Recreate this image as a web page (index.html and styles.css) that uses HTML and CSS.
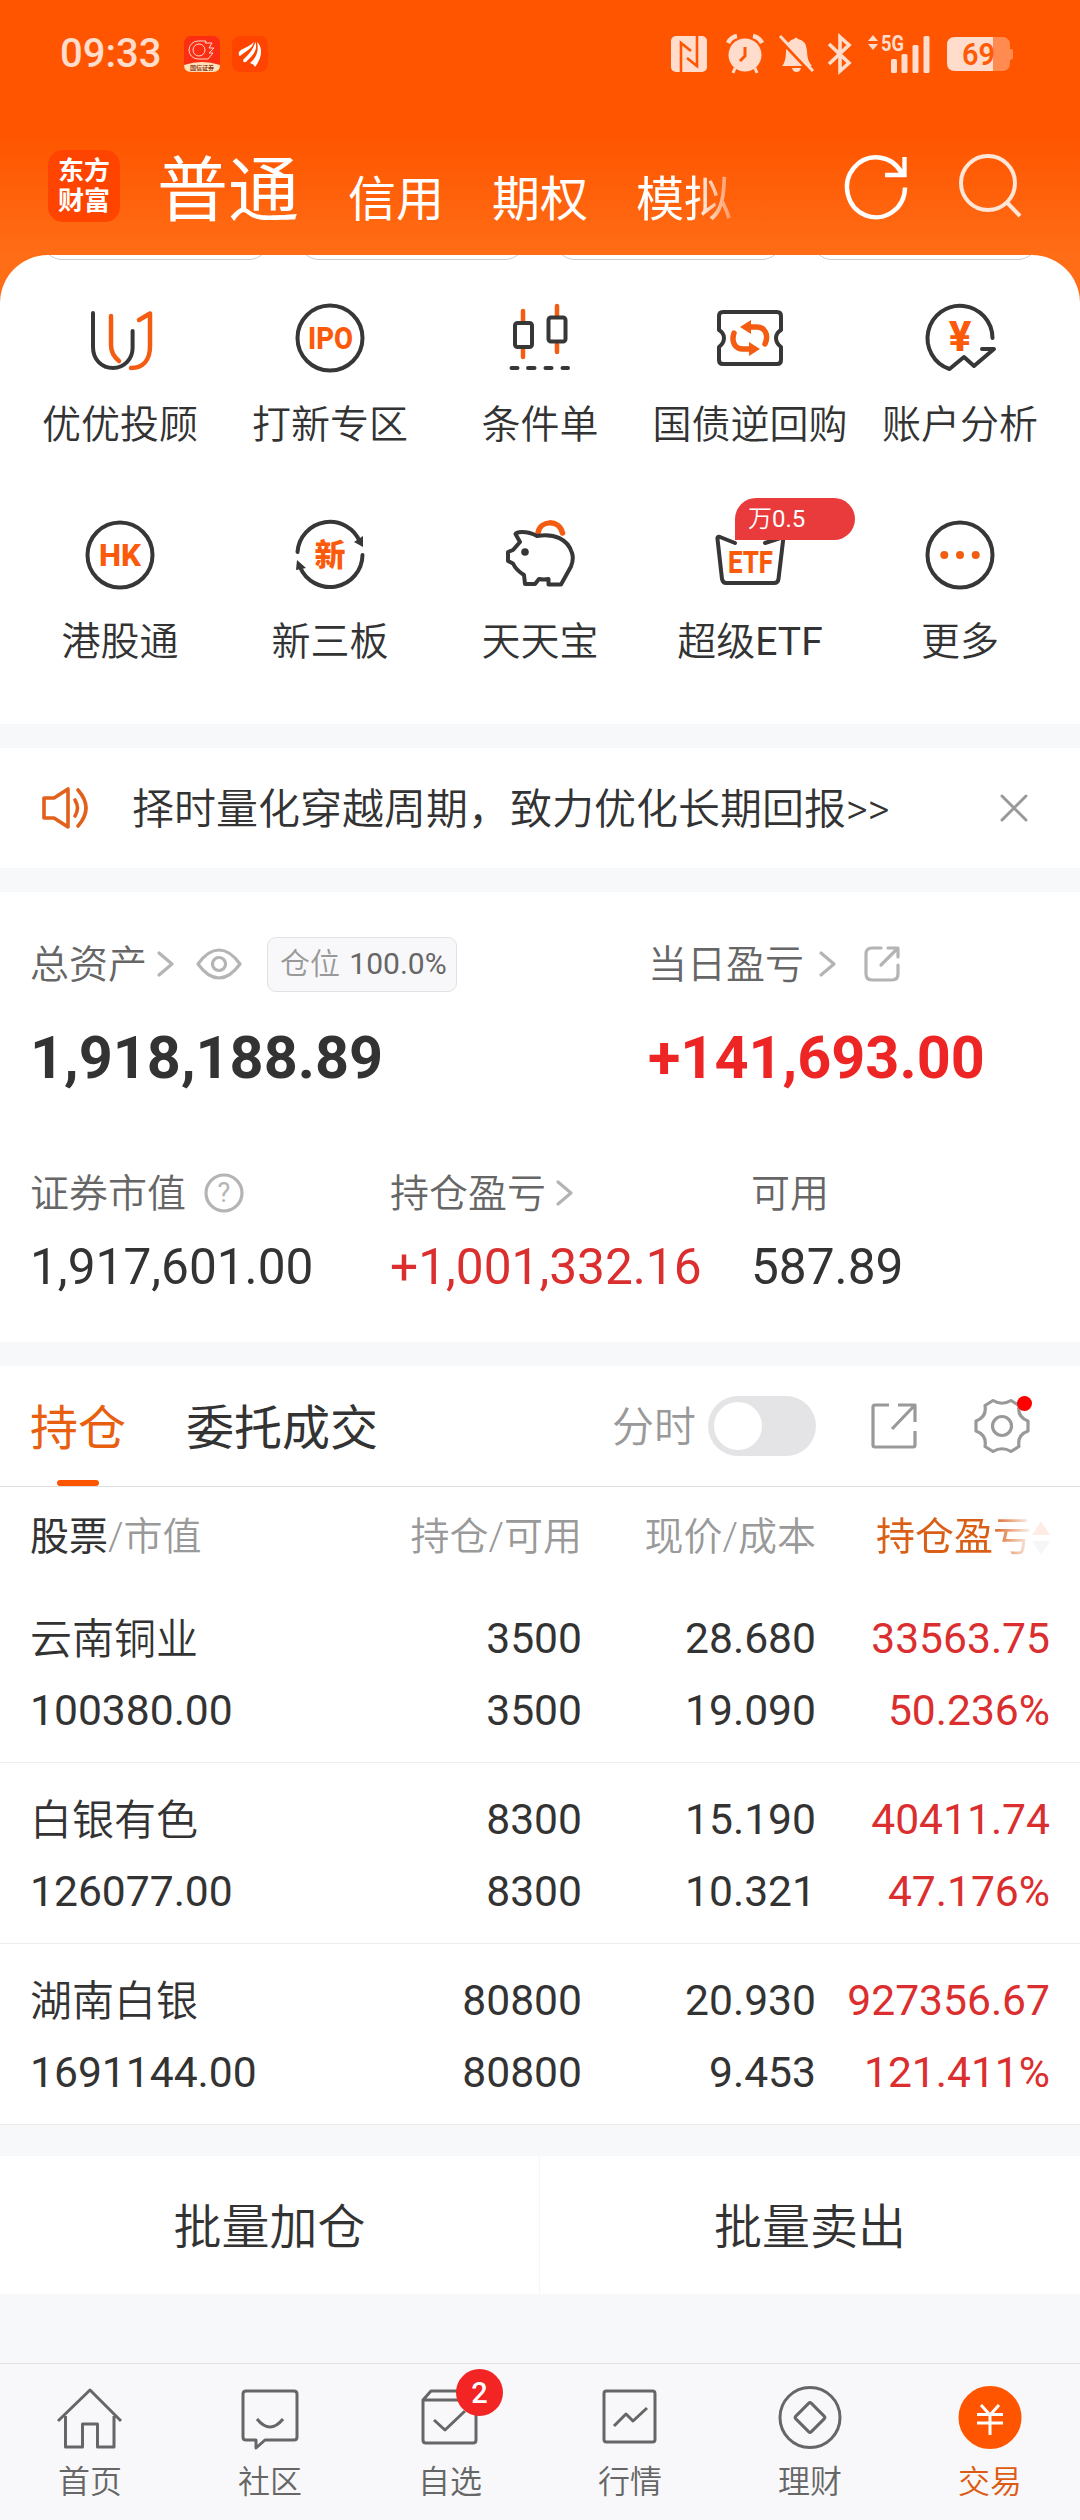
FILE: index.html
```html
<!DOCTYPE html>
<html lang="zh-CN">
  <head>
    <meta charset="UTF-8" />
    <meta name="viewport" content="width=device-width, initial-scale=1.0" />
    <title>交易</title>
    <link rel="stylesheet" href="styles.css">
  </head>
  <body>
    <header class="header">
      <div class="status-bar">
        <span class="time">09:33</span>
        <svg class="app-icon" width="36" height="36" viewBox="0 0 36 36">
          <rect width="36" height="36" rx="7" fill="#fb2d12" />
          <path d="M0 29Q18 23 36 29Q36 36 29 36H7Q0 36 0 29Z" fill="#ffe2b8" />
          <g fill="none" stroke="#ffd9cc" stroke-width="1">
            <path d="M22 5H14A9 9 0 0 0 14 23H24L29 17H25L30 12H25L28 7H21Z" />
            <circle cx="15" cy="14" r="6" />
          </g>
          <text x="18" y="34" class="app-icon-text">国信证券</text>
        </svg>
        <svg class="app-icon second" width="36" height="36" viewBox="0 0 36 36">
          <rect width="36" height="36" rx="8" fill="#ff4400" />
          <path d="M7 16C10 12 16 12 22 6C20 13 14 15 8 20Q6 19 7 16Z" fill="#fff" />
          <path d="M11 24C16 19 21 14 23.500 6C26 15 20 20 14 26Q11 27 11 24Z" fill="#fff" />
          <path d="M18 27C25 21 27 14 25 6C32 12 29 24 23 31Q22 28 18 27Z" fill="#fff" />
        </svg>

        <div class="status-icons">
          <svg width="36" height="36" viewBox="0 0 36 36">
            <rect width="36" height="36" rx="5" fill="#ffdccb" />
            <path d="M10 36V7L20 15M26 0V30L16 22" fill="none" stroke="#ff5500" stroke-width="2.6" />
          </svg>
          <svg class="alarm" width="38" height="40" viewBox="0 0 38 40">
            <circle cx="19" cy="21" r="16.500" fill="#ffdccb" />
            <path d="M2 9Q5 3 11 2M36 9Q33 3 27 2" fill="none" stroke="#ffdccb" stroke-width="4.500" />
            <path d="M9 34L7 39M29 34L31 39" stroke="#ffdccb" stroke-width="3" />
            <path d="M19 13V22L14 27" fill="none" stroke="#ff5500" stroke-width="3" />
          </svg>
          <svg class="bell" width="36" height="38" viewBox="0 0 36 38">
            <path d="M3 31Q7 27 7 16Q8 5 15 4Q17 1 19 4Q27 5 28 16Q28 26 33 31Z" fill="#ffdccb" />
            <path d="M13 33H22Q21 37 17.500 37Q14 37 13 33Z" fill="#ffdccb" />
            <path d="M0 4L32 38" stroke="#ff5500" stroke-width="3" />
            <path d="M1 1L34 36" stroke="#ffdccb" stroke-width="3" />
          </svg>
          <svg class="bluetooth" width="24" height="40" viewBox="0 0 24 40">
            <path d="M1 10L21 29L12 37V3L21 11L1 30" fill="none" stroke="#ffdccb" stroke-width="3.600" />
          </svg>
          <svg class="signal" width="62" height="40" viewBox="0 0 62 40">
            <g fill="#ffdccb">
              <path d="M0 7L5 1L10 7ZM0 10H10L5 16Z" />
              <rect x="23" y="25" width="6" height="14" rx="1.500" />
              <rect x="33.500" y="20" width="6" height="19" rx="1.500" />
              <rect x="44.500" y="11" width="6" height="28" rx="1.500" />
              <rect x="55.500" y="2" width="6" height="37" rx="1.500" />
              <text x="13" y="16.500" class="network" textLength="23" lengthAdjust="spacingAndGlyphs">5G</text>
            </g>
          </svg>
          <svg class="battery" width="66" height="34" viewBox="0 0 66 34">
            <path d="M46 0H55Q63 0 63 8V12H64Q66 12 66 14V20Q66 23 63 23V26Q63 34 55 34H46Z" fill="#ff8b50" />
            <path d="M46 0H8Q0 0 0 8V26Q0 34 8 34H46Z" fill="#ffdccb" />
            <text x="31.500" y="28" class="battery-level" textLength="33" lengthAdjust="spacingAndGlyphs">69</text>
          </svg>
        </div>
      </div>

      <div class="nav-bar">
        <div class="logo"><span>东方</span><span>财富</span></div>
        <nav class="account-tabs">
          <span class="account-tab active">普通</span>
          <span class="account-tab">信用</span>
          <span class="account-tab">期权</span>
          <span class="account-tab fade">模拟</span>
        </nav>
        <svg class="refresh" width="66" height="72" viewBox="0 0 66 72">
          <path d="M62 36.500A29 30 0 1 1 58.500 22M61.500 6V24H42" fill="none" stroke="#fff" stroke-width="4.400" />
          <path d="M52 13L61 23" stroke="#fff" stroke-width="4" />
        </svg>
        <svg class="search" width="66" height="72" viewBox="0 0 66 72">
          <circle cx="30" cy="32" r="27" fill="none" stroke="#ffe6d8" stroke-width="4" />
          <path d="M48.500 51L62 65" stroke="#ffe6d8" stroke-width="4" />
        </svg>
      </div>
    </header>

    <section class="functions">
      <div class="card-edges"><i></i><i></i><i></i><i></i></div>
      <div class="function-grid">
        <div class="function">
          <svg viewBox="0 0 72 72" class="icon">
            <path class="dark" d="M9 11V45C9 58 18 66 29 66S48.600 57 48.600 46V29" />
            <path class="orange" d="M27 14V43C27 50 30 55 35 59M55 18L66 11.500V44C66 58 59 66 47 66" />
          </svg>
          <span>优优投顾</span>
        </div>
        <div class="function">
          <svg viewBox="0 0 72 72" class="icon">
            <circle class="dark" cx="36" cy="36" r="32.500" />
            <text x="14" y="47" textLength="45" lengthAdjust="spacingAndGlyphs">IPO</text>
          </svg>
          <span>打新专区</span>
        </div>
        <div class="function">
          <svg viewBox="0 0 72 72" class="icon">
            <path class="orange" d="M19 9V20M19 47V55M53 4V14M53 42V50" />
            <rect class="dark" x="11" y="21" width="17" height="24" rx="2.500" />
            <rect class="dark" x="44.500" y="15.500" width="17" height="24" rx="2.500" />
            <path class="dark" d="M7.500 66H13.500M24 66H30.500M41.500 66H47.500M58.500 66H64" />
          </svg>
          <span>条件单</span>
        </div>
        <div class="function">
          <svg viewBox="0 0 72 72" class="icon">
            <path class="dark" d="M5 14Q5 10 9 10H63Q67 10 67 14V28Q62 31 62 36T67 45V58Q67 62 63 62H9Q5 62 5 58V45Q10 41 10 36T5 28Z" />
            <path class="orange thick" d="M20 31C17 40 21 47 29 47H36M51 42C55 33 51 25 43 25H36" />
            <path class="orange-fill" d="M26 25L37 18V32ZM46 47L35 40V54Z" />
          </svg>
          <span>国债逆回购</span>
        </div>
        <div class="function">
          <svg viewBox="0 0 72 72" class="icon">
            <path class="dark" d="M68.500 36A32.500 32.500 0 1 0 25.500 67L40 55L50 64L70 47H58" />
            <text x="36" y="49" class="yen">¥</text>
          </svg>
          <span>账户分析</span>
        </div>
        <div class="function">
          <svg viewBox="0 0 72 72" class="icon">
            <circle class="dark" cx="36" cy="36" r="32.500" />
            <text x="15" y="47" textLength="42" lengthAdjust="spacingAndGlyphs">HK</text>
          </svg>
          <span>港股通</span>
        </div>
        <div class="function">
          <svg viewBox="0 0 72 72" class="icon">
            <path class="dark" d="M3.500 33A32.500 32.500 0 0 1 66 23M68.500 36A32.500 32.500 0 0 1 6 48" />
            <path class="dark-fill" d="M60 23L69 17L69 28ZM3 41L12 49L2 51Z" />
            <text x="36" y="47" class="xin">新</text>
          </svg>
          <span>新三板</span>
        </div>
        <div class="function">
          <svg viewBox="0 0 72 72" class="icon">
            <path class="orange thick" d="M34 14C36 1 55 0 58.500 14" />
            <path class="pig" d="M11.500 15L16 23L9 31L4 33V42L9 44.500Q12 51 20 56L21 65H31L35 60Q40 61 44.500 60V65.500H57L67 47.500Q70 40 68 34C64 20 50 14 33 17Q26 13 18 13Q12 13 11.500 15Z" />
            <circle class="dark-fill" cx="21" cy="33" r="3.800" />
          </svg>
          <span>天天宝</span>
        </div>
        <div class="function">
          <svg viewBox="0 0 72 72" class="icon">
            <path class="dark" d="M21 24L6 18Q3 17 3.500 20L8 60Q9 64 12 64H60Q64 64 64.500 60L69.500 18L51 24" />
            <text x="14" y="54" textLength="45" lengthAdjust="spacingAndGlyphs">ETF</text>
          </svg>
          <span>超级<em>ETF</em></span>
          <b class="badge">万<em>0.5</em></b>
        </div>
        <div class="function">
          <svg viewBox="0 0 72 72" class="icon">
            <circle class="dark" cx="36" cy="36" r="32.500" />
            <g class="orange-fill">
              <circle cx="20.300" cy="36" r="4" />
              <circle cx="36" cy="36" r="4" />
              <circle cx="51.700" cy="36" r="4" />
            </g>
          </svg>
          <span>更多</span>
        </div>
      </div>
    </section>

    <section class="notice">
      <svg width="48" height="44" viewBox="0 0 48 44">
        <path d="M2 12H12L26 3V41L12 32H2Z M33 14Q38 22 33 30M36 4Q52 22 36 40" fill="none" stroke="#e0601c" stroke-width="3.600" stroke-linejoin="round" stroke-linecap="round" />
      </svg>
      <p>择时量化穿越周期，致力优化长期回报&gt;&gt;</p>
      <svg class="close" width="30" height="30" viewBox="0 0 30 30">
        <path d="M3 3L27 27M27 3L3 27" stroke="#999" stroke-width="3" stroke-linecap="round" />
      </svg>
    </section>

    <section class="assets">
      <div class="assets-main">
        <div class="asset">
          <div class="asset-label">
            总资产
            <svg class="chevron" width="18" height="28" viewBox="0 0 18 28"><path d="M3 3L16 14L3 25" /></svg>
            <svg class="eye" width="46" height="32" viewBox="0 0 46 32">
              <path d="M2 16Q12 2 23 2T44 16Q34 30 23 30T2 16Z" />
              <circle cx="23" cy="16" r="6.500" />
            </svg>
            <span class="position">仓位 <em>100.0%</em></span>
          </div>
          <strong>1,918,188.89</strong>
        </div>
        <div class="asset">
          <div class="asset-label">
            当日盈亏
            <svg class="chevron wide" width="18" height="28" viewBox="0 0 18 28"><path d="M3 3L16 14L3 25" /></svg>
            <svg class="share-small" width="36" height="36" viewBox="0 0 36 36">
              <path d="M17 2H8Q2 2 2 8V28Q2 34 8 34H28Q34 34 34 28V19M17 19L33 3M24 2H34V11" />
            </svg>
          </div>
          <strong class="up">+141,693.00</strong>
        </div>
      </div>
      <div class="assets-sub">
        <div class="asset">
          <div class="asset-label">
            证券市值
            <svg class="help" width="40" height="40" viewBox="0 0 40 40">
              <circle cx="20" cy="20" r="18" />
              <text x="20" y="29">?</text>
            </svg>
          </div>
          <span class="value">1,917,601.00</span>
        </div>
        <div class="asset">
          <div class="asset-label">
            持仓盈亏
            <svg class="chevron" width="18" height="28" viewBox="0 0 18 28"><path d="M3 3L16 14L3 25" /></svg>
          </div>
          <span class="value up">+1,001,332.16</span>
        </div>
        <div class="asset">
          <div class="asset-label">可用</div>
          <span class="value">587.89</span>
        </div>
      </div>
    </section>

    <section class="holdings">
      <div class="holding-tabs">
        <span class="holding-tab active">持仓</span>
        <span class="holding-tab">委托成交</span>
        <span class="minute-label">分时</span>
        <span class="switch"></span>
        <svg class="share" width="48" height="48" viewBox="0 0 48 48">
          <path d="M19 3H5Q3 3 3 5V43Q3 45 5 45H43Q45 45 45 43V29M22 27L44 4M28 3H45V20" />
        </svg>
        <span class="settings">
          <svg width="56" height="56" viewBox="0 0 56 56">
            <path d="M19 2.500Q28 8 37 2.500L45 7.500Q43 19 54 23V33Q43 37 45 48.500L37 53.500Q28 48 19 53.500L11 48.500Q13 37 2 33V23Q13 19 11 7.500Z" />
            <circle cx="28" cy="28" r="9.500" />
          </svg>
          <i class="dot"></i>
        </span>
      </div>

      <div class="row table-head">
        <span><b>股票</b>/市值</span>
        <span>持仓/可用</span>
        <span>现价/成本</span>
        <span class="sorted">
          持仓盈亏
          <svg width="18" height="36" viewBox="0 0 18 36">
            <path d="M0 15L9 1L18 15Z" fill="#ffece5" />
            <path d="M0 21H18L9 35Z" fill="#f6f6f6" />
          </svg>
        </span>
      </div>
      <div class="row stock">
        <span>云南铜业</span><span>3500</span><span>28.680</span><span class="up">33563.75</span>
        <span>100380.00</span><span>3500</span><span>19.090</span><span class="up">50.236%</span>
      </div>
      <div class="row stock">
        <span>白银有色</span><span>8300</span><span>15.190</span><span class="up">40411.74</span>
        <span>126077.00</span><span>8300</span><span>10.321</span><span class="up">47.176%</span>
      </div>
      <div class="row stock">
        <span>湖南白银</span><span>80800</span><span>20.930</span><span class="up">927356.67</span>
        <span>1691144.00</span><span>80800</span><span>9.453</span><span class="up">121.411%</span>
      </div>
    </section>

    <section class="batch">
      <button>批量加仓</button>
      <button>批量卖出</button>
    </section>

    <footer class="tab-bar">
      <a class="tab">
        <svg viewBox="0 0 72 72">
          <path d="M4 41L36 10L67 41M11.500 36V67H28.500V44H43.500V67H60V36" />
        </svg>
        首页
      </a>
      <a class="tab">
        <svg viewBox="0 0 72 72">
          <path d="M12 11H60Q63 11 63 14V57Q63 60 60 60H31L22 68V60H12Q9 60 9 57V14Q9 11 12 11Z" />
          <path d="M23 39Q36 55 49 39" />
        </svg>
        社区
      </a>
      <a class="tab">
        <svg viewBox="0 0 72 72">
          <path d="M9 20L17 11H54L62 20V60Q62 63 59 63H12Q9 63 9 60ZM9 20H62M20 40L31 50L51 31" />
        </svg>
        自选
        <b class="count">2</b>
      </a>
      <a class="tab">
        <svg viewBox="0 0 72 72">
          <rect x="10" y="11" width="51" height="51" rx="2.500" />
          <path d="M20 46L32 34L39 41L53 28" />
        </svg>
        行情
      </a>
      <a class="tab">
        <svg viewBox="0 0 72 72">
          <circle cx="36" cy="37.500" r="30" />
          <rect x="25" y="26.500" width="22" height="22" rx="2" transform="rotate(45 36 37.500)" />
        </svg>
        理财
      </a>
      <a class="tab active">
        <svg viewBox="0 0 72 72">
          <circle cx="36" cy="37.500" r="30" />
          <path d="M27 25L36 35L45 25M23 34.500H49M23 43H49M36 35V55" />
        </svg>
        交易
      </a>
    </footer>
  </body>
</html>
```

FILE: styles.css
```css
* {
  box-sizing: border-box;
}
body {
  margin: 0;
  width: 1080px;
  height: 2520px;
  display: flex;
  flex-direction: column;
  background-color: #f7f8fa;
  color: #333;
  font-family: Roboto, "Noto Sans CJK SC", sans-serif;
  font-weight: 350;
}
svg {
  display: block;
  flex: none;
  overflow: visible;
}
/* latin text and digits inside chinese labels */
em {
  font-style: normal;
  font-weight: 400;
}

/* header */
.header {
  height: 303px;
  flex: none;
  background: linear-gradient(#ff5500 0, #ff5500 135px, #ff6d16 255px);
}
.status-bar {
  display: flex;
  align-items: center;
  height: 108px;
  padding: 0 67px 0 60px;
}
.time {
  width: 124px;
  font-size: 40px;
  font-weight: 500;
  line-height: 48px;
  color: #ffdccb;
}
.app-icon-text {
  font-size: 6px;
  font-weight: 700;
  fill: #8c3b1c;
  text-anchor: middle;
}
.app-icon.second {
  margin-left: 12px;
}
.status-icons {
  display: flex;
  align-items: center;
  margin-left: auto;
}
.alarm {
  margin-left: 19px;
}
.bell {
  margin-left: 15px;
}
.bluetooth {
  margin-left: 13px;
}
.signal {
  margin-left: 16px;
}
.battery {
  margin-left: 17px;
}
.network {
  font-size: 22px;
  font-weight: 700;
}
.battery-level {
  font-size: 31px;
  font-weight: 600;
  fill: #ff5a08;
  text-anchor: middle;
}
.nav-bar {
  display: flex;
  align-items: center;
  height: 156px;
  padding: 2px 56px 0 48px;
}
.logo {
  display: flex;
  flex-direction: column;
  align-items: center;
  justify-content: center;
  width: 72px;
  height: 72px;
  margin-top: -2px;
  border-radius: 15px;
  background-color: #ff4400;
  color: #fff;
  font-size: 26px;
  font-weight: 700;
  line-height: 30px;
}
.account-tabs {
  display: flex;
  align-items: flex-end;
  gap: 48px;
  margin-left: 37px;
  padding-top: 7px;
  color: #fff;
  font-size: 48px;
  font-weight: 400;
  line-height: 78px;
}
.account-tab.active {
  margin-right: 1px;
  font-size: 71px;
  line-height: 96px;
}
.account-tab.fade {
  -webkit-mask-image: linear-gradient(90deg, #000 60%, transparent 120%);
  mask-image: linear-gradient(90deg, #000 60%, transparent 120%);
}
.refresh {
  margin-left: auto;
}
.search {
  margin-left: 49px;
}

/* function entries */
.functions {
  height: 469px;
  flex: none;
  margin-top: -48px;
  border-radius: 48px 48px 0 0;
  background-color: #fff;
}
.card-edges {
  display: flex;
  gap: 30px;
  height: 5px;
  padding: 0 42px;
  overflow: hidden;
}
.card-edges i {
  flex: 1;
  height: 40px;
  margin-top: -35px;
  border: 1px solid #ccc;
  border-radius: 20px;
}
.function-grid {
  display: grid;
  grid-template-columns: repeat(5, 210px);
  grid-auto-rows: 217px;
  padding: 42px 15px 0;
}
.function {
  position: relative;
  display: flex;
  flex-direction: column;
  align-items: center;
  font-size: 39px;
  line-height: 48px;
  white-space: nowrap;
}
.icon {
  width: 72px;
  height: 72px;
  margin-bottom: 27px;
}
.icon .dark,
.icon .pig,
.icon .orange {
  fill: none;
  stroke: #373737;
  stroke-width: 4;
  stroke-linecap: round;
  stroke-linejoin: round;
}
.icon .pig {
  fill: #fff;
}
.icon .orange {
  stroke: #f45c12;
  stroke-width: 4.500;
}
.icon .orange.thick {
  stroke-width: 5.500;
}
.icon .dark-fill {
  fill: #373737;
}
.icon .orange-fill {
  fill: #f45c12;
}
.icon text {
  fill: #fa5a0a;
  font-size: 32px;
  font-weight: 800;
}
.icon .yen {
  font-size: 42px;
  text-anchor: middle;
}
.icon .xin {
  font-size: 31px;
  text-anchor: middle;
}
.badge {
  position: absolute;
  top: -21px;
  left: 90px;
  width: 120px;
  height: 42px;
  padding-left: 13px;
  border-radius: 21px 21px 21px 0;
  background-color: #e93b3c;
  color: #fff;
  font-size: 24px;
  font-weight: 350;
  line-height: 43px;
}

/* notice */
.notice {
  display: flex;
  align-items: center;
  height: 120px;
  flex: none;
  margin-top: 24px;
  padding: 0 51px 0 42px;
  background-color: #fff;
  font-size: 42px;
}
.notice p {
  margin: 0 0 0 42px;
  padding-top: 4px;
  line-height: 60px;
}
.notice .close {
  margin-left: auto;
}

/* assets */
.assets {
  height: 450px;
  flex: none;
  margin-top: 24px;
  padding: 41px 30px 0;
  background-color: #fff;
}
.assets-main {
  display: grid;
  grid-template-columns: 618px 1fr;
  height: 229px;
}
.assets-sub {
  display: grid;
  grid-template-columns: 360px 361px 1fr;
}
.asset-label {
  display: flex;
  align-items: center;
  height: 56px;
  color: #666;
  font-size: 39px;
  white-space: nowrap;
}
/* icons sit slightly lower than the text beside them */
.asset-label svg,
.asset-label .position {
  margin-top: 6px;
}
.asset-label svg {
  fill: none;
  stroke: #b4b4b4;
  stroke-width: 3.200;
  stroke-linecap: round;
  stroke-linejoin: round;
}
.chevron {
  margin-left: 9px;
}
.chevron.wide {
  margin-left: 14px;
}
.eye {
  margin-left: 22px;
}
.position {
  height: 55px;
  margin-left: 25px;
  padding: 0 9px 0 12px;
  border: 1px solid #e2e2e4;
  border-radius: 9px;
  background-color: #f8f8fa;
  color: #999;
  font-size: 30px;
  line-height: 51px;
}
.position em {
  margin-left: 2px;
  color: #666;
}
.share-small {
  margin-left: 28px;
}
.help {
  margin-left: 18px;
}
.help text {
  font-size: 27px;
  font-weight: 400;
  fill: #b4b4b4;
  stroke: none;
  text-anchor: middle;
}
.asset strong {
  display: block;
  margin-top: 33px;
  font-size: 59.400px;
  font-weight: 700;
  line-height: 72px;
}
.asset .value {
  display: block;
  margin-top: 21px;
  font-size: 49.600px;
  font-weight: 400;
  line-height: 56px;
}
.up {
  color: #db2e2e;
}
.asset strong.up {
  color: #ee2525;
}

/* holdings */
.holdings {
  flex: none;
  margin-top: 24px;
  background-color: #fff;
}
.holding-tabs {
  display: flex;
  align-items: center;
  height: 121px;
  padding: 0 50px 0 30px;
  border-bottom: 1px solid #dedede;
  font-size: 48px;
}
.holding-tab {
  position: relative;
  margin-right: 60px;
  padding-top: 6px;
  line-height: 114px;
  font-weight: 400;
}
.holding-tab.active {
  color: #e8600f;
}
.holding-tab.active::after {
  content: "";
  position: absolute;
  left: 27px;
  bottom: 0;
  width: 42px;
  height: 6px;
  border-radius: 3px;
  background-color: #ff5500;
}
.minute-label {
  margin-left: auto;
  padding-top: 3px;
  color: #999;
  font-size: 42px;
  line-height: 60px;
}
.switch {
  width: 108px;
  height: 60px;
  margin-left: 12px;
  padding: 6px;
  border-radius: 30px;
  background-color: #e4e4e6;
}
.switch::before {
  content: "";
  display: block;
  width: 48px;
  height: 48px;
  border-radius: 50%;
  background-color: #fff;
}
.share,
.settings svg {
  fill: none;
  stroke: #999;
  stroke-width: 3.200;
  stroke-linejoin: round;
}
.share {
  margin-left: 54px;
}
.settings {
  position: relative;
  margin-left: 56px;
}
.dot {
  position: absolute;
  top: -2px;
  right: -2px;
  width: 15px;
  height: 15px;
  border-radius: 50%;
  background-color: #ff0000;
}
.row {
  display: grid;
  grid-template-columns: 1fr 200px 234px 234px;
  padding: 0 30px;
  text-align: right;
  white-space: nowrap;
}
.row span:nth-child(4n + 1) {
  text-align: left;
}
.table-head {
  height: 95px;
  color: #999;
  font-size: 39px;
  line-height: 101px;
}
.table-head b {
  color: #333;
  font-weight: 400;
}
.sorted {
  display: flex;
  align-items: center;
  justify-content: flex-end;
  font-weight: 400;
  background: linear-gradient(90deg, #d95f16 75%, #fff 93%);
  -webkit-background-clip: text;
  background-clip: text;
  -webkit-text-fill-color: transparent;
}
.stock {
  height: 181px;
  padding-top: 20px;
  border-bottom: 1px solid #ececec;
  font-size: 42.600px;
  font-weight: 400;
  line-height: 72px;
  grid-auto-rows: 72px;
}
.stock span:first-child {
  padding-top: 2px;
  font-size: 42px;
  font-weight: 350;
}

/* batch buttons */
.batch {
  display: grid;
  grid-template-columns: 539px 1fr;
  height: 138px;
  flex: none;
  margin-top: 31px;
  background-color: #fff;
}
.batch button {
  padding: 5px 0 0;
  border: 0;
  background: none;
  color: #333;
  font: inherit;
  font-size: 48px;
  line-height: 72px;
}
.batch button + button {
  border-left: 1px solid #f5f5f5;
}

/* bottom tab bar */
.tab-bar {
  display: flex;
  height: 157px;
  flex: none;
  margin-top: auto;
  border-top: 1px solid #e2e2e4;
  background-color: #f8f8fa;
}
.tab {
  position: relative;
  flex: 1;
  display: flex;
  flex-direction: column;
  align-items: center;
  padding-top: 16px;
  color: #666;
  font-size: 32px;
  line-height: 60px;
}
.tab svg {
  width: 72px;
  height: 72px;
  fill: none;
  stroke: #666;
  stroke-width: 3;
  stroke-linejoin: round;
}
.tab.active {
  color: #dd5c14;
}
.tab.active svg {
  stroke: #fff;
}
.tab.active circle {
  fill: #ff5500;
  stroke: #ff5500;
}
.count {
  position: absolute;
  top: 5px;
  left: 96px;
  width: 47px;
  height: 47px;
  border-radius: 50%;
  background-color: #f22424;
  color: #fff;
  font-size: 29px;
  font-weight: 500;
  line-height: 48px;
  text-align: center;
}
```
